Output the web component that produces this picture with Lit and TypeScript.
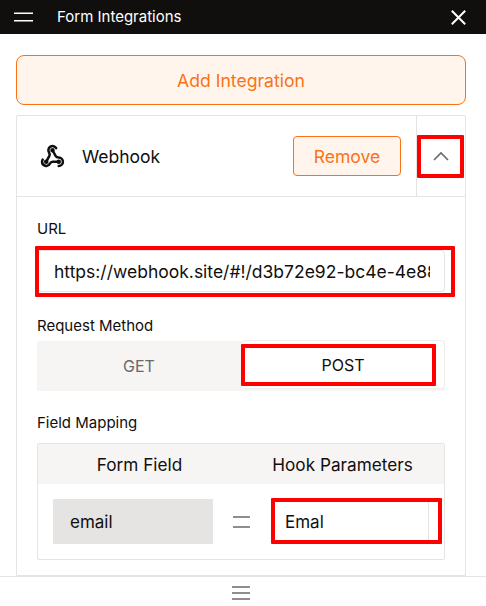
import { LitElement, html, css } from "lit";
import { customElement } from "lit/decorators.js";

@customElement("app-root")
export class AppRoot extends LitElement {
  static styles = css`
    :host { display: flex; flex-direction: column; width: 486px; height: 606px; overflow: hidden; background: #fff;
      font-family: Inter, "Liberation Sans", sans-serif; color: #100f0e; box-sizing: border-box; }
    * { box-sizing: border-box; }
    .top { height: 34px; flex: none; background: #100f0e; color: #fff; display: flex; align-items: center; padding: 0 20px 0 14px; }
    .top .title { font-size: 15px; margin-left: 24px; flex: 1; line-height: 34px; }
    svg { display: block; flex: none; }
    .main { flex: 1; min-height: 0; overflow: hidden; padding: 21px 20px 0 16px; display: flex; flex-direction: column; gap: 10px; }
    .add { height: 50px; flex: none; border: 1px solid #f97316; border-radius: 8px; background: #fff5ed; color: #f97316;
      font-size: 17.6px; font-weight: 400; display: flex; align-items: center; justify-content: center; }
    .card { border: 1px solid #e5e4e3; border-radius: 2px 2px 0 0; flex: 1; min-height: 0; }
    .head { height: 81px; border-bottom: 1px solid #e5e4e3; display: flex; align-items: center; padding-left: 22px; }
    .head .name { font-size: 17.5px; margin-left: 16px; flex: 1; font-weight: 400; padding-top: 1px; }
    .remove { width: 108px; height: 40px; border: 1px solid #f97316; border-radius: 4px; background: #fff5ed; color: #f97316;
      font-size: 17.6px; font-weight: 400; display: flex; align-items: center; justify-content: center; margin-right: 15px; }
    .toggle { width: 49px; height: 80px; border-left: 1px solid #e5e4e3; display: flex; align-items: center; justify-content: center; position: relative; }
    .mark { position: absolute; border: 4px solid #fe0000; border-radius: 1px; pointer-events: none; }
    .mark.chev { left: 0; right: 1px; top: 19px; bottom: 18px; }
    .body { padding: 22px 20px 0 20px; }
    .label { font-size: 15px; line-height: 20px; }
    .url { margin-top: 11px; height: 42px; border: 1px solid #e5e4e3; border-radius: 4px; padding: 1px 14px 0 16px;
      display: flex; align-items: center; font-size: 17.5px; overflow: hidden; }
    .url-wrap { position: relative; }
    .url .clip { white-space: nowrap; overflow: hidden; width: 100%; }
    .mark.u { left: -2px; right: -10px; top: -4px; bottom: -5px; }
    .seg { margin-top: 5px; height: 50px; background: #f6f5f4; display: grid; grid-template-columns: 1fr 1fr; font-size: 16px; }
    .seg > div { display: flex; align-items: center; justify-content: center; }
    .seg .get { color: #6b6966; }
    .seg .post { background: #fff; border: 1px solid #eeedec; border-radius: 4px; margin: -1px 0 2px 0; position: relative; }
    .mark.p { left: -1px; top: 3px; right: 8px; bottom: 2px; }
    .gap1 { margin-top: 24px; }
    .gap2 { margin-top: 22px; }
    .map { margin-top: 10px; border: 1px solid #e5e4e3; border-radius: 2px; }
    .map .mh { height: 40px; background: #f6f5f4; display: grid; grid-template-columns: 1fr 1fr; font-size: 17.2px; }
    .map .mh span { display: flex; align-items: center; justify-content: center; }
    .map .row { display: flex; align-items: center; padding: 15px 0 15px 15px; height: 75px; }
    .em { width: 160px; height: 45px; background: #e5e4e3; font-size: 17px; padding-left: 17px; display: flex; align-items: center; }
    .eq { flex: none; width: 57px; display: flex; justify-content: center; }
    .param { position: relative; flex: 1; height: 45px; font-size: 17px; display: flex; align-items: center; padding-left: 15px; }
    .mark.m { left: 1px; top: -1px; right: 2px; bottom: 0; }
    .param .bar { position: absolute; right: 15px; top: 0; bottom: 0; width: 1px; background: #e5e4e3; }
    .foot { height: 30px; flex: none; background: #fff; border-top: 1px solid #e5e4e3; display: flex; justify-content: center; align-items: center; padding: 2px 4px 0 0; }
  `;

  render() {
    return html`
      <div class="top">
        <svg width="19" height="10" viewBox="0 0 19 10"><path d="M0 1.2h19M0 8.7h19" stroke="#fff" stroke-width="1.6"/></svg>
        <div class="title">Form Integrations</div>
        <svg width="15" height="15" viewBox="0 0 15 15"><path d="M.8.8l13.4 13.4M14.2.8 .8 14.2" stroke="#fff" stroke-width="2"/></svg>
      </div>
      <div class="main">
        <div class="add">Add Integration</div>
        <div class="card">
          <div class="head">
            <svg width="27" height="25" viewBox="0 0 24 24" fill="none" stroke="#100f0e" stroke-width="2.4" stroke-linecap="round" stroke-linejoin="round">
              <path d="M18 16.98h-5.99c-1.1 0-1.95.94-2.48 1.9A4 4 0 0 1 2 17c.01-.7.2-1.4.57-2"/>
              <path d="m6 17 3.13-5.78c.53-.97.1-2.18-.5-3.1a4 4 0 1 1 6.89-4.06"/>
              <path d="m12 6 3.13 5.73C15.66 12.7 16.9 13 18 13a4 4 0 0 1 0 8"/>
              <circle cx="6" cy="17" r="1" fill="#100f0e"/><circle cx="12" cy="6" r="1" fill="#100f0e"/><circle cx="18" cy="17" r="1" fill="#100f0e"/>
            </svg>
            <div class="name">Webhook</div>
            <div class="remove">Remove</div>
            <div class="toggle">
              <svg width="16" height="10" viewBox="0 0 16 10"><path d="M1 9l7-7 7 7" fill="none" stroke="#6b6966" stroke-width="1.6"/></svg>
              <div class="mark chev"></div>
            </div>
          </div>
          <div class="body">
            <div class="label">URL</div>
            <div class="url-wrap">
              <div class="url"><div class="clip">https://webhook.site/#!/d3b72e92-bc4e-4e88-a1f0</div></div>
              <div class="mark u"></div>
            </div>
            <div class="label gap1">Request Method</div>
            <div class="seg">
              <div class="get">GET</div>
              <div class="post">POST<div class="mark p"></div></div>
            </div>
            <div class="label gap2">Field Mapping</div>
            <div class="map">
              <div class="mh"><span>Form Field</span><span>Hook Parameters</span></div>
              <div class="row">
                <div class="em">email</div>
                <div class="eq"><svg width="17" height="12" viewBox="0 0 17 12"><path d="M0 1h17M0 11h17" stroke="#6b6966" stroke-width="1.6"/></svg></div>
                <div class="param">Emal<div class="bar"></div><div class="mark m"></div></div>
              </div>
            </div>
          </div>
        </div>
      </div>
      <div class="foot">
        <svg width="18" height="14" viewBox="0 0 18 14"><path d="M0 1h18M0 7h18M0 13h18" stroke="#6b6966" stroke-width="1.4"/></svg>
      </div>
    `;
  }
}
